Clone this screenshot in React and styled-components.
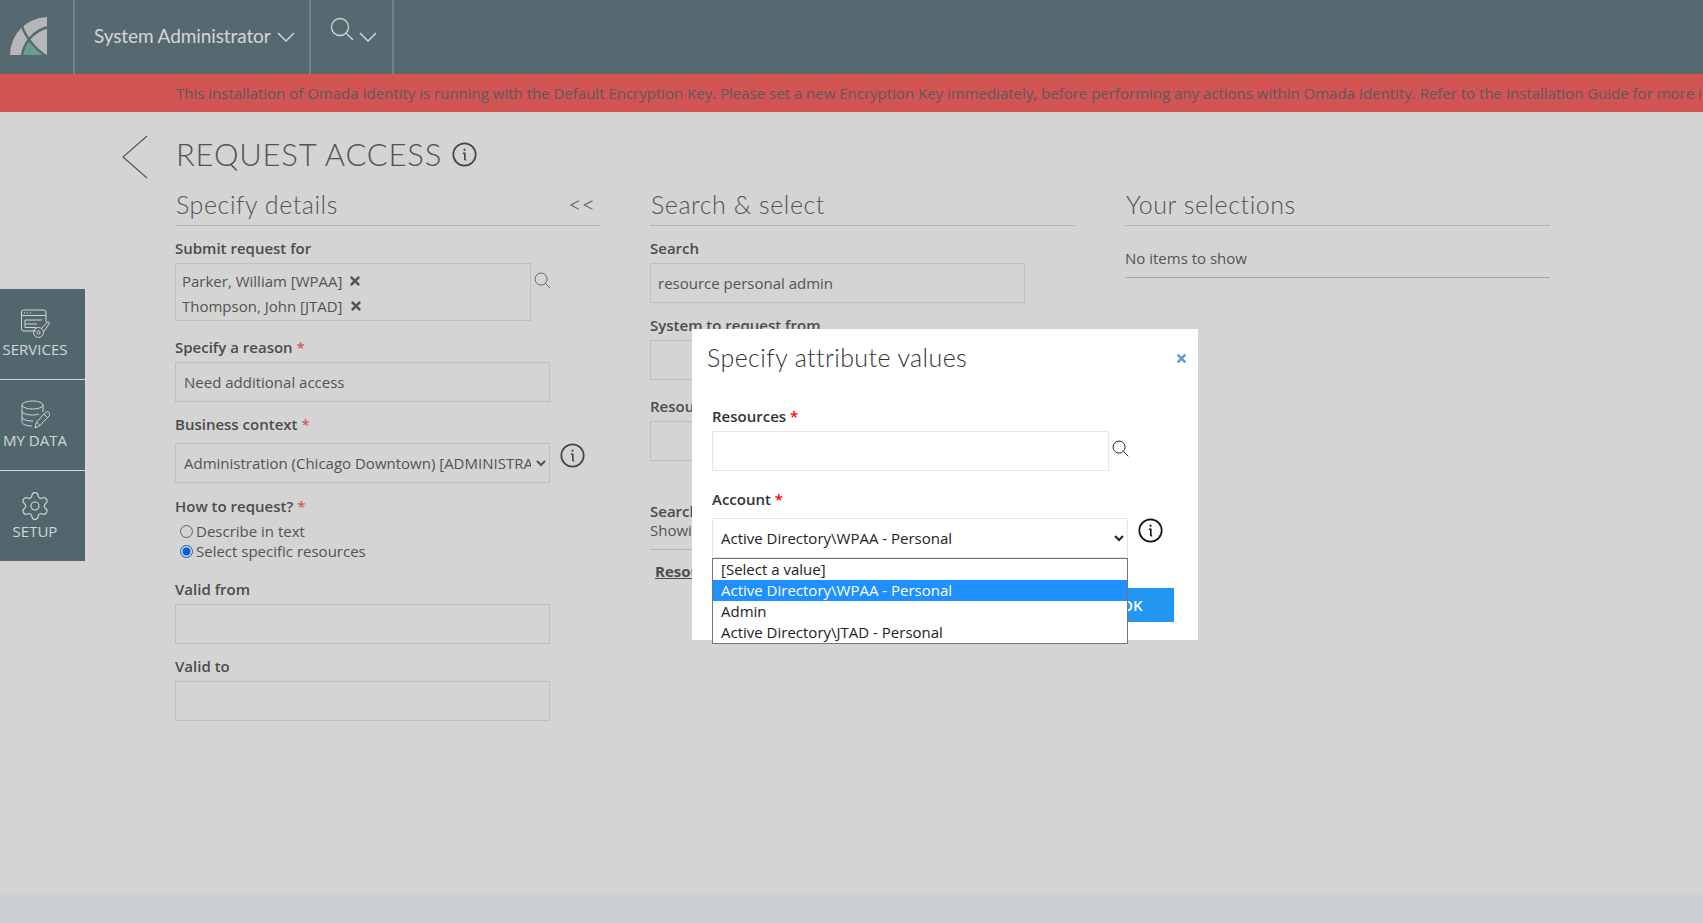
import React from "react";
import styled, { createGlobalStyle } from "styled-components";
import { FaTimes } from "react-icons/fa";
import { Settings } from "lucide-react";

const GlobalStyle = createGlobalStyle`
  html, body {
    margin: 0;
    height: 100%;
    overflow: hidden;
    background: #fff;
    font-family: "Open Sans", "Liberation Sans", sans-serif;
  }
  * { box-sizing: border-box; }
`;

const SearchIcon = ({ size = 18, color = "#666", stroke = 1.2 }) => (
  <svg width={size} height={size} viewBox="0 0 24 24" fill="none" stroke={color} strokeWidth={stroke}>
    <circle cx="10" cy="10" r="8.5" />
    <path d="M16.2 16.2 23 23" />
  </svg>
);

const Chevron = ({ width = 18, height = 10, color = "#fff" }) => (
  <svg width={width} height={height} viewBox="0 0 18 10" fill="none" stroke={color} strokeWidth="1.5">
    <path d="M1 1l8 8 8-8" />
  </svg>
);

const InfoIcon = ({ size = 25, color = "#555" }) => (
  <svg width={size} height={size} viewBox="0 0 25 25" fill="none" stroke={color} strokeWidth="1.7">
    <circle cx="12.5" cy="12.5" r="11.2" />
    <path d="M10.8 11.2h2v5.6c0 .8.5 1.2 1.4.9" strokeWidth="1.6" />
    <circle cx="12.5" cy="7.7" r=".7" fill={color} strokeWidth="1" />
  </svg>
);

const Logo = () => (
  <svg width="40" height="40" viewBox="0 0 40 40">
    <path d="M1 39A38 38 0 0 1 38 1V39Z" fill="#dcdcdc" />
    <path d="M13 39 20 24 36 39Z" fill="#7fbfa5" />
    <path d="M13 39C15 27 24 15 39 11M13 10C16 20 26 33 37 40" fill="none" stroke="#687d87" strokeWidth="2.4" />
  </svg>
);

const ServicesIcon = () => (
  <svg width="30" height="30" viewBox="0 0 30 30" fill="none" stroke="#fff" strokeWidth="1">
    <path d="M16 22H3.5A2 2 0 0 1 1.500 20V3A2 2 0 0 1 3.500 1H24A2 2 0 0 1 26 3V13" />
    <path d="M1.500 6.500H26" />
    <path d="M4 3.800h1M7 3.800h1M10 3.800h1" strokeWidth="1.300" />
    <path d="M5 11H22M5 15H17M5 11V18.500H16" />
    <circle cx="18.500" cy="23.500" r="5" />
    <circle cx="18.500" cy="23.500" r="1.600" />
    <path d="M21.500 19.500 28 12.500 29.500 14 24 22.500" />
  </svg>
);

const DataIcon = () => (
  <svg width="30" height="30" viewBox="0 0 30 30" fill="none" stroke="#fff" strokeWidth="1">
    <ellipse cx="12.500" cy="5" rx="10.500" ry="4" />
    <path d="M2 5V22C2 24 6 26 12 26" />
    <path d="M23 5V12" />
    <path d="M2 11C2 13.500 7 15 12.500 15 15 15 17 14.700 19 14" />
    <path d="M2 17C2 19.500 7 21 13 21" />
    <path d="M15 28 16.500 22 25.500 12.500C26.500 11.500 28 11.500 29 12.500 30 13.500 29.800 15 29 16L20 25.500Z" />
    <path d="M16.500 22 20 25.500M24 14 27.500 17.500" />
  </svg>
);

const App = () => {
  return (
    <>
      <GlobalStyle />
      <Page>
        <TopBar>
          <LogoCell>
            <Logo />
          </LogoCell>
          <UserMenu>
            System Administrator
            <Chevron />
          </UserMenu>
          <SearchMenu>
            <SearchIcon size={24} color="#fff" stroke={1.3} />
            <Chevron />
          </SearchMenu>
        </TopBar>
        <Banner>
          This installation of Omada Identity is running with the Default Encryption Key. Please set a new Encryption
          Key immediately, before performing any actions within Omada Identity. Refer to the Installation Guide for more
          information.
        </Banner>
        <Main>
          <SideNav>
            <NavItem>
              <ServicesIcon />
              <span>SERVICES</span>
            </NavItem>
            <NavItem>
              <DataIcon />
              <span>MY DATA</span>
            </NavItem>
            <NavItem>
              <GearIcon size={32} strokeWidth={0.85} color="#fff" />
              <span>SETUP</span>
            </NavItem>
          </SideNav>
          <BackColumn>
            <svg width="26" height="44" viewBox="0 0 26 44" fill="none" stroke="#666" strokeWidth="1.100">
              <path d="M25 1 1 22l24 21" />
            </svg>
          </BackColumn>
          <Content>
            <PageTitle>
              REQUEST ACCESS
              <InfoIcon size={25} />
            </PageTitle>
            <Columns>
              <Column>
                <ColumnHeader>
                  Specify details
                  <Collapse>&lt;&lt;</Collapse>
                </ColumnHeader>
                <Label $top={12}>Submit request for</Label>
                <PickerRow>
                  <ChipBox>
                    <Chip>
                      Parker, William [WPAA]
                      <FaTimes size={14} />
                    </Chip>
                    <Chip>
                      Thompson, John [JTAD]
                      <FaTimes size={14} />
                    </Chip>
                  </ChipBox>
                  <SearchSlot>
                    <SearchIcon size={17} />
                  </SearchSlot>
                </PickerRow>
                <Label $top={16}>
                  Specify a reason <Star>*</Star>
                </Label>
                <TextInput $width={375} defaultValue="Need additional access" />
                <Label $top={12} $bottom={9}>
                  Business context <Star>*</Star>
                </Label>
                <SelectRow>
                  <Select $width={375} defaultValue="admin">
                    <option value="admin">Administration (Chicago Downtown) [ADMINISTRATION]</option>
                  </Select>
                  <InfoSlot>
                    <InfoIcon />
                  </InfoSlot>
                </SelectRow>
                <Label $top={13} $bottom={5}>
                  How to request? <Star>*</Star>
                </Label>
                <RadioRow>
                  <input type="radio" name="how" />
                  Describe in text
                </RadioRow>
                <RadioRow>
                  <input type="radio" name="how" defaultChecked />
                  Select specific resources
                </RadioRow>
                <Label $top={18}>Valid from</Label>
                <TextInput $width={375} />
                <Label $top={12}>Valid to</Label>
                <TextInput $width={375} />
              </Column>
              <Column>
                <ColumnHeader>Search &amp; select</ColumnHeader>
                <Label $top={12}>Search</Label>
                <TextInput $width={375} $pad={7} defaultValue="resource personal admin" />
                <Label $top={12}>System to request from</Label>
                <TextInput $width={375} />
                <Label $top={16}>Resource type</Label>
                <TextInput $width={375} />
                <Label $top={40} $bottom={0}>
                  Search results
                </Label>
                <Muted>Showing 0 items</Muted>
                <ResultHead>
                  <u>Resource</u>
                </ResultHead>
              </Column>
              <Column>
                <ColumnHeader>Your selections</ColumnHeader>
                <EmptyRow>No items to show</EmptyRow>
              </Column>
            </Columns>
          </Content>
        </Main>
        <Footer />
        <Backdrop />
        <Modal>
          <ModalHeader>
            Specify attribute values
            <CloseButton>
              <FaTimes size={13} />
            </CloseButton>
          </ModalHeader>
          <ModalBody>
            <ModalLabel $top={0} $bottom={5}>
              Resources <ModalStar>*</ModalStar>
            </ModalLabel>
            <PickerRow>
              <ModalInput />
              <ModalSearch>
                <SearchIcon size={17} color="#000" />
              </ModalSearch>
            </PickerRow>
            <ModalLabel $top={18} $bottom={9}>
              Account <ModalStar>*</ModalStar>
            </ModalLabel>
            <SelectRow>
              <SelectWrap>
                <ModalSelect defaultValue="wpaa">
                  <option value="wpaa">Active Directory\WPAA - Personal</option>
                </ModalSelect>
                <OptionList>
                  <Option>[Select a value]</Option>
                  <Option $active>Active Directory\WPAA - Personal</Option>
                  <Option>Admin</Option>
                  <Option>Active Directory\JTAD - Personal</Option>
                </OptionList>
              </SelectWrap>
              <ModalInfo>
                <InfoIcon color="#111" />
              </ModalInfo>
            </SelectRow>
            <ModalActions>
              <OkButton>OK</OkButton>
            </ModalActions>
          </ModalBody>
        </Modal>
      </Page>
    </>
  );
};

export default App;

const Page = styled.div`
  position: relative;
  display: flex;
  flex-direction: column;
  height: 100vh;
  overflow: hidden;
`;

const TopBar = styled.header`
  display: flex;
  height: 74px;
  flex-shrink: 0;
  background: #687d87;
`;

const LogoCell = styled.div`
  width: 75px;
  padding: 16px 0 0 9px;
  border-right: 2px solid #8d9ca3;
`;

const UserMenu = styled.div`
  display: flex;
  align-items: center;
  gap: 6px;
  width: 236px;
  padding: 0 0 4px 19px;
  border-right: 2px solid #8d9ca3;
  color: #fff;
  font-family: Lato, "Open Sans", sans-serif;
  font-size: 19px;
  font-weight: 400;
  letter-spacing: -0.1px;

  svg {
    margin-top: 4px;
  }
`;

const SearchMenu = styled.div`
  display: flex;
  align-items: center;
  gap: 5px;
  width: 83px;
  padding: 0 0 16px 19px;
  border-right: 2px solid #8d9ca3;

  svg:last-child {
    margin-top: 16px;
  }
`;

const Banner = styled.div`
  height: 38px;
  flex-shrink: 0;
  padding-left: 176px;
  overflow: hidden;
  background: #fd6564;
  color: #6e6e72;
  font-size: 15px;
  letter-spacing: -0.004px;
  line-height: 38px;
  white-space: nowrap;
`;

const Main = styled.main`
  display: flex;
  flex: 1;
  min-height: 0;
`;

const SideNav = styled.nav`
  display: flex;
  flex-direction: column;
  flex-shrink: 0;
  width: 85px;
  margin-top: 177px;
`;

const NavItem = styled.a`
  display: flex;
  flex-direction: column;
  align-items: center;
  height: 91px;
  padding: 20px 15px 0 0;
  border-bottom: 1px solid #fff;
  background: #627c84;
  color: #fff;
  font-size: 15px;
  line-height: 20px;

  &:last-child {
    height: 90px;
    border-bottom: 0;
  }

  span {
    white-space: nowrap;
  }
`;

const GearIcon = styled(Settings)`
  margin: -1px 0;
`;

const BackColumn = styled.div`
  flex-shrink: 0;
  width: 90px;
  padding: 23px 0 0 37px;
`;

const Content = styled.div`
  flex: 1;
  min-width: 0;
`;

const PageTitle = styled.h1`
  display: flex;
  align-items: center;
  gap: 10px;
  height: 40px;
  margin: 22px 0 1px 1px;
  color: #666;
  font-family: Lato, "Open Sans", sans-serif;
  font-size: 31px;
  font-weight: 300;
  letter-spacing: 0.8px;
`;

const Columns = styled.div`
  display: flex;
  gap: 50px;
`;

const Column = styled.section`
  display: flex;
  flex-direction: column;
  align-items: flex-start;
  width: 425px;
`;

const ColumnHeader = styled.h2`
  display: flex;
  justify-content: space-between;
  width: 100%;
  height: 51px;
  margin: 0;
  padding: 12px 5px 0 1px;
  border-bottom: 1px solid #dadada;
  color: #666;
  font-family: Lato, "Open Sans", sans-serif;
  font-size: 25px;
  font-weight: 300;
  letter-spacing: 0.55px;
  line-height: 34px;
`;

const Collapse = styled.span`
  padding-top: 6px;
  font-size: 23px;
  line-height: 22px;
  letter-spacing: 0;
`;

const Label = styled.label`
  display: block;
  margin-top: ${(p) => p.$top ?? 14}px;
  margin-bottom: ${(p) => p.$bottom ?? 5}px;
  color: #5c5c5c;
  font-size: 15px;
  font-weight: 600;
  line-height: 20px;
  white-space: nowrap;
`;

const Star = styled.span`
  color: #ff6b6b;
`;

const PickerRow = styled.div`
  display: flex;
  align-items: flex-start;
`;

const ChipBox = styled.div`
  display: flex;
  flex-direction: column;
  width: 356px;
  height: 58px;
  padding: 4px 6px 0;
  border: 1px solid #e6e6e6;
`;

const Chip = styled.div`
  display: flex;
  align-items: center;
  gap: 6px;
  height: 25px;
  color: #666;
  font-size: 15px;
  white-space: nowrap;
`;

const SearchSlot = styled.div`
  margin: 9px 0 0 3px;
`;

const TextInput = styled.input`
  width: ${(p) => p.$width}px;
  height: 40px;
  padding: 0 ${(p) => p.$pad ?? 8}px;
  border: 1px solid #e6e6e6;
  border-radius: 0;
  outline: none;
  background: transparent;
  color: #666;
  font-family: inherit;
  font-size: 15px;
`;

const SelectRow = styled.div`
  display: flex;
  align-items: flex-start;
`;

const Select = styled.select`
  width: ${(p) => p.$width}px;
  height: 40px;
  padding: 0 2px 0 4px;
  border: 1px solid #e6e6e6;
  border-radius: 0;
  background: transparent;
  color: #666;
  font-family: inherit;
  font-size: 15px;
`;

const InfoSlot = styled.div`
  margin-left: 10px;
`;

const RadioRow = styled.label`
  display: flex;
  align-items: center;
  height: 20px;
  padding-left: 5px;
  color: #666;
  font-size: 15px;

  input {
    width: 13px;
    height: 13px;
    margin: 0 3px 0 0;
  }
`;

const Muted = styled.div`
  color: #666;
  font-size: 15px;
  line-height: 19px;
`;

const ResultHead = styled.div`
  width: 100%;
  margin-top: 9px;
  padding: 11px 0 0 5px;
  border-top: 1px solid #dadada;
  color: #5c5c5c;
  font-size: 15px;
  font-weight: 700;
  line-height: 20px;
`;

const EmptyRow = styled.div`
  width: 100%;
  height: 52px;
  padding-top: 22px;
  border-bottom: 1px solid #c8c8c8;
  color: #666;
  font-size: 15px;
  line-height: 20px;
`;

const Footer = styled.footer`
  flex-shrink: 0;
  height: 28px;
  background: #f4f9fc;
`;

const Backdrop = styled.div`
  position: absolute;
  inset: 0;
  background: rgba(0, 0, 0, 0.17);
`;

const Modal = styled.div`
  position: absolute;
  top: 329px;
  left: 692px;
  width: 506px;
  height: 311px;
  background: #fff;
`;

const ModalHeader = styled.div`
  display: flex;
  justify-content: space-between;
  padding: 10px 10px 0 15px;
  color: #333;
  font-family: Lato, "Open Sans", sans-serif;
  font-size: 25px;
  font-weight: 300;
  letter-spacing: 0.4px;
  line-height: 36px;
`;

const CloseButton = styled.span`
  display: flex;
  padding-top: 13px;
  color: #5b9bd5;
  line-height: 1;
`;

const ModalBody = styled.div`
  padding: 31px 24px 0 20px;
`;

const ModalLabel = styled.label`
  display: block;
  margin-top: ${(p) => p.$top}px;
  margin-bottom: ${(p) => p.$bottom}px;
  color: #333;
  font-size: 15px;
  font-weight: 600;
  line-height: 20px;
`;

const ModalStar = styled.span`
  color: #f00;
`;

const ModalInput = styled.input`
  width: 397px;
  height: 40px;
  border: 1px solid #e6e6e6;
  outline: none;
`;

const ModalSearch = styled.div`
  margin: 9px 0 0 3px;
`;

const SelectWrap = styled.div`
  position: relative;
  width: 416px;
`;

const ModalSelect = styled.select`
  width: 100%;
  height: 40px;
  padding: 0 4px;
  border: 1px solid #e6e6e6;
  border-radius: 0;
  background: #fff;
  color: #222;
  font-family: inherit;
  font-size: 15px;
`;

const OptionList = styled.div`
  position: absolute;
  z-index: 2;
  top: 40px;
  left: 0;
  width: 100%;
  height: 86px;
  border: 1px solid #767676;
  background: #fff;
`;

const Option = styled.div`
  height: 21px;
  padding: 0 8px;
  background: ${(p) => (p.$active ? "#1e90ff" : "transparent")};
  color: ${(p) => (p.$active ? "#fff" : "#222")};
  font-size: 15px;
  line-height: 21px;
`;

const ModalInfo = styled.div`
  margin-left: 10px;
`;

const ModalActions = styled.div`
  display: flex;
  justify-content: flex-end;
  margin-top: 30px;
`;

const OkButton = styled.button`
  width: 84px;
  height: 34px;
  border: 0;
  background: #2196f3;
  color: #fff;
  font-family: inherit;
  font-size: 15px;
  font-weight: 600;
`;
